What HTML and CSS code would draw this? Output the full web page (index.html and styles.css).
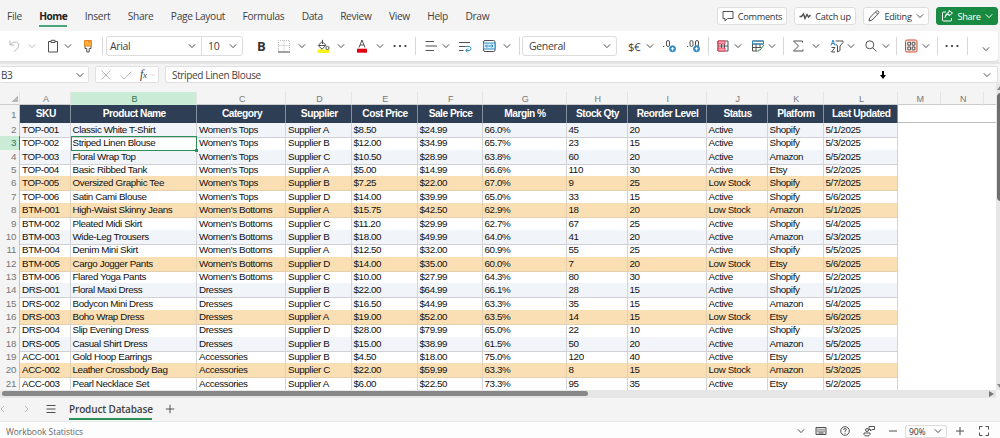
FILE: index.html
```html
<!DOCTYPE html>
<html lang="en">
<head>
  <meta charset="UTF-8" />
  <title>Product Database</title>
  <link rel="stylesheet" href="styles.css">
</head>
<body>
  <svg class="sprite">
    <symbol id="chev" viewBox="0 0 8 8"><path d="M.8 2.3 4 5.6 7.2 2.3"/></symbol>
    <symbol id="dots" viewBox="0 0 16 16"><g fill="#333" stroke="none"><circle cx="2.6" cy="8" r="1.1"/><circle cx="8" cy="8" r="1.1"/><circle cx="13.4" cy="8" r="1.1"/></g></symbol>
  </svg>

  <div class="menu-bar">
    <nav class="tabs">
      <span>File</span>
      <span class="active">Home</span>
      <span>Insert</span>
      <span>Share</span>
      <span>Page Layout</span>
      <span>Formulas</span>
      <span>Data</span>
      <span>Review</span>
      <span>View</span>
      <span>Help</span>
      <span>Draw</span>
    </nav>
    <div class="actions">
      <button class="comments"><svg class="icon" viewBox="0 0 12 12"><path d="M1 1.5h10v7H5.5L3 11V8.500H1z"/></svg>Comments</button>
      <button class="catchup"><svg class="icon" viewBox="0 0 12 12"><path stroke-width="1.4" d="M.5 6.500h2L4.500 4l1.500 4.500L8 4.500l1.500 2.500 2-2"/></svg>Catch up</button>
      <button class="editing"><svg class="icon" viewBox="0 0 12 12"><path d="M1 11l.8-3.300L8.500 1q1.500-.7 2.300.8.300.8-.3 1.400L4.200 10zM7.500 2l2.300 2.300"/></svg>Editing<svg class="chev"><use href="#chev"/></svg></button>
      <button class="share"><svg class="icon" viewBox="0 0 12 12"><path d="M5 2H2.500Q1.500 2 1.500 3v7q0 1 1 1h7q1 0 1-1V8M4 7.500q.5-3.500 4-3.500V6L11.500 3 8 .5v1.800Q4.500 3 4 7.500z"/></svg>Share<svg class="chev"><use href="#chev"/></svg></button>
    </div>
  </div>

  <div class="ribbon">
    <svg class="tool faded" viewBox="0 0 16 16"><path d="M3 2.500v4.500h4.500M3 7q3-4 6.500-3 3.500 1.500 2 5Q10.500 11 7 13.500"/></svg>
    <svg class="chev faded"><use href="#chev"/></svg>
    <svg class="tool" viewBox="0 0 16 16"><path d="M6 3.500H3.500v10.500h9V3.500H10M6 2.300h4v2.200H6z"/></svg>
    <svg class="chev"><use href="#chev"/></svg>
    <svg class="tool" viewBox="0 0 16 16"><path d="M5 8v2.500h1.800V14h2.400v-3.500H11V8"/><path fill="#fbb040" stroke="#e8881c" d="M4.500 2.500h7V8h-7z"/><path stroke="#e8881c" d="M8.500 2.500v2.200M10 2.500v2.200"/></svg>
    <i class="sep"></i>
    <div class="font-box"><span class="font-name">Arial<svg class="chev"><use href="#chev"/></svg></span><span class="font-size">10<svg class="chev"><use href="#chev"/></svg></span></div>
    <b class="bold">B</b>
    <svg class="tool" viewBox="0 0 16 16"><path stroke="#bbb" stroke-dasharray="1 1" d="M2.500 13V2.500h11V13M8 2.500V13M2.500 7.500h11"/><path stroke="#444" d="M2 14h12"/></svg>
    <svg class="chev"><use href="#chev"/></svg>
    <svg class="tool" viewBox="0 0 16 16"><path stroke="#f7f316" stroke-width="3.500" d="M2.500 13.200h11.500"/><path d="M7 3.500 3.200 7.500 7 11.200l4-4zM7.500 6V1.800M4 7.500h7"/><circle cx="12.500" cy="10" r="1.600"/></svg>
    <svg class="chev"><use href="#chev"/></svg>
    <svg class="tool" viewBox="0 0 16 16"><path stroke="#e3000f" stroke-width="4" d="M3 12.700h10"/><path d="M5 9.500 8 2l3 7.500M6 7h4"/></svg>
    <svg class="chev"><use href="#chev"/></svg>
    <svg class="tool"><use href="#dots"/></svg>
    <i class="sep"></i>
    <svg class="tool" viewBox="0 0 16 16"><path d="M2.500 3.500H11M2.500 8H14M2.500 12.500H11"/></svg>
    <svg class="chev"><use href="#chev"/></svg>
    <svg class="tool" viewBox="0 0 16 16"><path d="M2 4.500h11M2 8.500h6M2 12.500h4.500"/><path stroke="#2e8cc7" d="M8 8.500h4q2 0 2 2t-2 2H9M10.800 10.500l-2 2 2 2"/></svg>
    <svg class="tool" viewBox="0 0 16 16"><rect x="2.500" y="2.500" width="11.500" height="11" rx="1.500"/><path fill="#d8eefb" stroke="#2e8cc7" d="M2.500 5h11.500v6H2.500z"/><path stroke="#2e8cc7" d="M4.500 8h7.500M6 6.500 4.500 8 6 9.500M10.500 6.500 12 8l-1.500 1.500"/></svg>
    <svg class="chev"><use href="#chev"/></svg>
    <i class="sep"></i>
    <div class="number-box">General<svg class="chev"><use href="#chev"/></svg></div>
    <span class="currency">$€</span>
    <svg class="chev"><use href="#chev"/></svg>
    <svg class="tool" viewBox="0 0 16 16"><path d="M2 8.500h1.200"/><rect x="5.500" y="2.500" width="3" height="6" rx="1.500"/><circle cx="11.500" cy="10.800" r="3" fill="#2e8cc7" stroke="#2e8cc7"/><path stroke="#fff" d="M9.800 10.800h3.400M11.500 9.100v3.400"/></svg>
    <svg class="tool" viewBox="0 0 16 16"><path d="M2 8.500h1.200"/><rect x="5" y="2.500" width="3" height="6" rx="1.500"/><rect x="10.500" y="2.500" width="3" height="6" rx="1.500"/><circle cx="11.500" cy="10.800" r="3" fill="#2e8cc7" stroke="#2e8cc7"/><path stroke="#fff" d="M9.800 10.800h3.400M11.500 9.100v3.400"/></svg>
    <i class="sep"></i>
    <svg class="tool" viewBox="0 0 16 16"><path d="M3 3h10v10H3zM3 8h10M6.500 5v6M9.500 5v6"/><path stroke="#e2445c" fill="#f6a6b2" d="M3 3h7v3H3zM3 10h7v3H3z"/><path stroke="#e2445c" d="M3 3v10"/></svg>
    <svg class="chev"><use href="#chev"/></svg>
    <svg class="tool" viewBox="0 0 16 16"><path d="M2.500 3h11v3h-11zM2.500 6v7h5M2.500 9.500h9M6 6v7M10 6v3"/><path stroke="#2e8cc7" d="M2.500 3h11v3h-11z"/><path stroke="#279257" d="M8 13.500q.5-2 2-1.500L14 7"/></svg>
    <svg class="chev"><use href="#chev"/></svg>
    <i class="sep"></i>
    <svg class="tool" viewBox="0 0 16 16"><path d="M12.500 4.500V3H3.500l5 5-5 5h9.500v-1.500"/></svg>
    <svg class="chev"><use href="#chev"/></svg>
    <svg class="tool" viewBox="0 0 16 16"><path stroke="#2e8cc7" d="M2 7.500 4 2l2 5.500M3 5.500h2"/><path d="M2.500 9.500h3.500l-3.500 4.500H6M6.500 3h7.500v1.500L11 8v4.500L8.500 14V8L6.800 6"/></svg>
    <svg class="chev"><use href="#chev"/></svg>
    <svg class="tool" viewBox="0 0 16 16"><circle cx="6.800" cy="6.800" r="4"/><path d="M9.800 9.800 13.500 13.500"/></svg>
    <svg class="chev"><use href="#chev"/></svg>
    <i class="sep"></i>
    <svg class="tool" viewBox="0 0 16 16"><rect x="2.500" y="2" width="11.500" height="12" rx="1.500" stroke="#d9482b" fill="#fbe5df"/><path fill="#fff" d="M4.800 4.300h2.700v2.900H4.800zM9.200 4.300h2.700v2.900H9.200zM4.800 9h2.700v2.900H4.800zM9.200 9h2.700v2.900H9.200z"/></svg>
    <svg class="chev"><use href="#chev"/></svg>
    <i class="sep"></i>
    <svg class="tool"><use href="#dots"/></svg>
    <i class="sep"></i>
    <svg class="chev collapse"><use href="#chev"/></svg>
  </div>

  <div class="formula-bar">
    <div class="name-box">B3<svg class="chev"><use href="#chev"/></svg></div>
    <div class="fx-box">
      <svg class="icon faded" viewBox="0 0 12 12"><path d="M1.500 1.500l9 9M10.500 1.500l-9 9"/></svg>
      <svg class="icon faded" viewBox="0 0 12 12"><path d="M.5 6.500 4 10l7.500-7.500"/></svg>
      <i class="fx">f<small>x</small></i>
      <svg class="chev faded tiny"><use href="#chev"/></svg>
    </div>
    <div class="formula"><span>Striped Linen Blouse</span>
      <svg class="arrow" viewBox="0 0 6 8"><path fill="#000" stroke="none" d="M2 0h2v4h2L3 8 0 4h2z"/></svg>
      <svg class="chev"><use href="#chev"/></svg>
    </div>
  </div>

  <div class="sheet-area">
    <div class="grid" id="grid"></div>
    <div class="v-scroll">
      <i class="up"></i>
      <div class="v-thumb"></div>
      <i class="down"></i>
    </div>
  </div>

  <div class="h-scroll"><div class="h-thumb"></div><i class="right"></i></div>

  <div class="sheet-tabs">
    <svg class="nav faded" viewBox="0 0 8 8"><path d="M4 1 1 4l3 3"/></svg>
    <svg class="nav next faded" viewBox="0 0 8 8"><path d="M2 1l3 3-3 3"/></svg>
    <svg class="list" viewBox="0 0 10 10"><path d="M.5 1.500h9M.5 5h9M.5 8.500h9"/></svg>
    <span class="sheet-name">Product Database</span>
    <svg class="add" viewBox="0 0 10 10"><path d="M5 .8v8.400M.8 5h8.400"/></svg>
  </div>

  <div class="status-bar">
    <span>Workbook Statistics</span>
    <div class="status-tools">
      <svg class="chev"><use href="#chev"/></svg>
      <svg class="st" viewBox="0 0 12 12"><path fill="#ddd" d="M1 2.500h10v7H1z"/><path stroke-dasharray="1 1" d="M2.500 4.700h7M2.500 6.300h7"/><path d="M3.500 8h5"/></svg>
      <svg class="st" viewBox="0 0 12 12"><circle cx="6" cy="6" r="4.300"/><path d="M4.700 5q0-1.500 1.300-1.500T7.300 4.800Q7 5.700 6 6v.8M6 7.700v1"/></svg>
      <svg class="st" viewBox="0 0 12 12"><path d="M6 1.500h5.500v3H9L7.500 6V4.500H6zM1 8h6v1.500Q6.500 11 4 11T1 9.500z"/><circle cx="4" cy="5" r="1.500"/></svg>
      <svg class="st" viewBox="0 0 12 12"><path d="M2 6h8"/></svg>
      <div class="zoom-box">90%<svg class="chev"><use href="#chev"/></svg></div>
      <svg class="st" viewBox="0 0 12 12"><path d="M6 2v8M2 6h8"/></svg>
      <svg class="st" viewBox="0 0 12 12"><path d="M1.500 4.500v-3h3M7.500 1.500h3v3M10.500 7.500v3h-3M4.500 10.500h-3v-3"/></svg>
    </div>
  </div>

  <script>
    const headers = ['SKU', 'Product Name', 'Category', 'Supplier', 'Cost Price', 'Sale Price', 'Margin %',
      'Stock Qty', 'Reorder Level', 'Status', 'Platform', 'Last Updated'];

    const products = [
      ['TOP-001', 'Classic White T-Shirt', "Women's Tops", 'Supplier A', '$8.50', '$24.99', '66.0%', 45, 20, 'Active', 'Shopify', '5/1/2025'],
      ['TOP-002', 'Striped Linen Blouse', "Women's Tops", 'Supplier B', '$12.00', '$34.99', '65.7%', 23, 15, 'Active', 'Shopify', '5/3/2025'],
      ['TOP-003', 'Floral Wrap Top', "Women's Tops", 'Supplier C', '$10.50', '$28.99', '63.8%', 60, 20, 'Active', 'Amazon', '5/5/2025'],
      ['TOP-004', 'Basic Ribbed Tank', "Women's Tops", 'Supplier A', '$5.00', '$14.99', '66.6%', 110, 30, 'Active', 'Etsy', '5/2/2025'],
      ['TOP-005', 'Oversized Graphic Tee', "Women's Tops", 'Supplier B', '$7.25', '$22.00', '67.0%', 9, 25, 'Low Stock', 'Shopify', '5/7/2025'],
      ['TOP-006', 'Satin Cami Blouse', "Women's Tops", 'Supplier D', '$14.00', '$39.99', '65.0%', 33, 15, 'Active', 'Shopify', '5/6/2025'],
      ['BTM-001', 'High-Waist Skinny Jeans', "Women's Bottoms", 'Supplier A', '$15.75', '$42.50', '62.9%', 18, 20, 'Low Stock', 'Amazon', '5/1/2025'],
      ['BTM-002', 'Pleated Midi Skirt', "Women's Bottoms", 'Supplier C', '$11.20', '$29.99', '62.7%', 67, 25, 'Active', 'Shopify', '5/4/2025'],
      ['BTM-003', 'Wide-Leg Trousers', "Women's Bottoms", 'Supplier B', '$18.00', '$49.99', '64.0%', 41, 20, 'Active', 'Amazon', '5/3/2025'],
      ['BTM-004', 'Denim Mini Skirt', "Women's Bottoms", 'Supplier A', '$12.50', '$32.00', '60.9%', 55, 25, 'Active', 'Shopify', '5/5/2025'],
      ['BTM-005', 'Cargo Jogger Pants', "Women's Bottoms", 'Supplier D', '$14.00', '$35.00', '60.0%', 7, 20, 'Low Stock', 'Etsy', '5/6/2025'],
      ['BTM-006', 'Flared Yoga Pants', "Women's Bottoms", 'Supplier C', '$10.00', '$27.99', '64.3%', 80, 30, 'Active', 'Shopify', '5/2/2025'],
      ['DRS-001', 'Floral Maxi Dress', 'Dresses', 'Supplier B', '$22.00', '$64.99', '66.1%', 28, 15, 'Active', 'Shopify', '5/1/2025'],
      ['DRS-002', 'Bodycon Mini Dress', 'Dresses', 'Supplier C', '$16.50', '$44.99', '63.3%', 35, 15, 'Active', 'Amazon', '5/4/2025'],
      ['DRS-003', 'Boho Wrap Dress', 'Dresses', 'Supplier A', '$19.00', '$52.00', '63.5%', 14, 15, 'Low Stock', 'Etsy', '5/6/2025'],
      ['DRS-004', 'Slip Evening Dress', 'Dresses', 'Supplier D', '$28.00', '$79.99', '65.0%', 22, 10, 'Active', 'Shopify', '5/3/2025'],
      ['DRS-005', 'Casual Shirt Dress', 'Dresses', 'Supplier B', '$15.00', '$38.99', '61.5%', 50, 20, 'Active', 'Amazon', '5/5/2025'],
      ['ACC-001', 'Gold Hoop Earrings', 'Accessories', 'Supplier B', '$4.50', '$18.00', '75.0%', 120, 40, 'Active', 'Etsy', '5/1/2025'],
      ['ACC-002', 'Leather Crossbody Bag', 'Accessories', 'Supplier C', '$22.00', '$59.99', '63.3%', 8, 15, 'Low Stock', 'Amazon', '5/3/2025'],
      ['ACC-003', 'Pearl Necklace Set', 'Accessories', 'Supplier A', '$6.00', '$22.50', '73.3%', 95, 35, 'Active', 'Etsy', '5/2/2025']
    ];

    let html = '<div class="row letters"><span class="corner"></span>';
    'ABCDEFGHIJKLMN'.split('').forEach(letter => {
      html += `<span class="${letter === 'B' ? 'selected' : ''}">${letter}</span>`;
    });
    html += '</div><div class="row head"><span class="num">1</span>';
    headers.forEach(text => {
      html += `<span class="th">${text}</span>`;
    });
    html += '</div>';

    products.forEach((product, index) => {
      const rowNumber = index + 2;
      let rowClass = rowNumber % 2 === 0 ? 'striped' : '';
      if (product[9] === 'Low Stock') {
        rowClass = 'low';
      }
      html += `<div class="row ${rowClass}"><span class="num ${rowNumber === 3 ? 'selected' : ''}">${rowNumber}</span>`;
      product.forEach((value, col) => {
        html += `<span class="td ${rowNumber === 3 && col === 1 ? 'cursor' : ''}">${value}</span>`;
      });
      html += '</div>';
    });

    document.getElementById('grid').innerHTML = html;
  </script>
</body>
</html>
```
FILE: styles.css
```css
* {
  box-sizing: border-box;
}

body {
  margin: 0;
  width: 1000px;
  height: 438px;
  overflow: hidden;
  display: flex;
  flex-direction: column;
  background: #f4f4f4;
  font-family: "Open Sans", "Noto Sans", sans-serif;
  font-size: 10px;
  letter-spacing: -.35px;
  color: #424242;
}

svg {
  fill: none;
  stroke: #505050;
  stroke-width: 1;
  flex: none;
  display: block;
}

.sprite {
  position: absolute;
  width: 0;
  height: 0;
}

.chev {
  width: 8px;
  height: 8px;
}

.faded {
  stroke: #b8b8b8;
}

.icon {
  width: 12px;
  height: 12px;
}

/* menu */
.menu-bar {
  height: 31px;
  flex: none;
  display: flex;
  justify-content: space-between;
}

.tabs {
  display: flex;
  gap: 17.4px;
  padding: 9px 0 0 7px;
  font-size: 10.2px;
  letter-spacing: -.32px;
  line-height: 15px;
  white-space: nowrap;
}

.tabs .active {
  font-weight: bold;
  letter-spacing: -.5px;
  color: #222;
  height: 18px;
  border-bottom: 2px solid #4ba67a;
}

.actions {
  display: flex;
  gap: 7px;
  padding: 7px 2px 0 0;
}

.actions button {
  height: 18px;
  display: flex;
  align-items: center;
  justify-content: center;
  gap: 4px;
  padding: 0;
  background: #fff;
  border: 1px solid #dedede;
  border-radius: 3px;
  font-family: inherit;
  font-size: 9.2px;
  letter-spacing: -.3px;
  color: #333;
  white-space: nowrap;
}

.comments { width: 70px; }
.catchup { width: 62px; }
.editing { width: 66px; }

.actions .share {
  width: 62px;
  background: #188a42;
  border-color: #188a42;
  color: #fff;
}

.share svg {
  stroke: #fff;
}

/* ribbon */
.ribbon {
  width: 998px;
  height: 30px;
  flex: none;
  padding-left: 7px;
  background: #fff;
  border-radius: 0 4px 4px 0;
  box-shadow: 0 2px 2px #dcdcdc;
  display: grid;
  align-items: center;
  grid-template-columns: 21px 17px 19px 16px 22px 4px 149px 21px 22px 17px 22px 17px 22px 16px 23px 8px 19px 15px 24px 22px 16px 3px 106px 18px 15px 24px 23px 7px 19px 16px 18px 15px 7px 22px 17px 18px 16px 19px 14px 7px 19px 15px 7px 23px 15px 8px;
}

.tool {
  width: 16px;
  height: 16px;
}

.sep {
  width: 1px;
  height: 18px;
  background: #d8d8d8;
}

.font-box, .number-box {
  height: 20px;
  display: flex;
  border: 1px solid #dcdcdc;
  border-radius: 3px;
  font-size: 10.5px;
}

.font-box {
  width: 137px;
}

.font-name, .font-size, .number-box {
  display: flex;
  align-items: center;
  justify-content: space-between;
  padding: 0 5px 0 3px;
}

.font-name {
  width: 94px;
}

.font-size {
  flex: 1;
  padding-left: 6px;
  border-left: 1px solid #dcdcdc;
}

.number-box {
  width: 95px;
  padding-left: 6px;
}

.bold {
  padding-left: 2px;
  font-size: 13px;
  color: #333;
}

.currency {
  font-size: 11.5px;
  letter-spacing: -.7px;
}

.collapse {
  margin-top: 6px;
}

/* formula bar */
.formula-bar {
  height: 20px;
  flex: none;
  display: flex;
  margin-top: 1px;
  padding: 2px 2px 0 0;
  border-top: 2px solid #e5e5e5;
}

.formula-bar > div {
  height: 17px;
  display: flex;
  align-items: center;
  background: #fff;
  border: 1px solid #e0e0e0;
  border-radius: 2px;
}

.formula-bar .name-box {
  width: 89px;
  justify-content: space-between;
  padding: 0 4px 0 1px;
  border-left: 0;
}

.fx-box {
  width: 64px;
  margin-left: 6px;
  padding-left: 4px;
  gap: 8px;
}

.fx-box .icon {
  width: 12px;
}

.fx {
  font-family: "Liberation Serif", serif;
  font-size: 12px;
  line-height: 14px;
}

.fx small {
  font-size: 9px;
}

.fx-box .tiny {
  width: 5px;
  margin-left: -5px;
}

.formula {
  flex: 1;
  margin-left: 6px;
  padding: 0 6px;
}

.formula span {
  flex: 1;
}

.arrow {
  width: 6px;
  height: 8px;
  margin-right: 97px;
}

/* grid */
.sheet-area {
  height: 308px;
  flex: none;
  display: flex;
}

.grid {
  width: 996px;
  height: 308px;
  padding-top: 10px;
  overflow: hidden;
  font-family: "Liberation Sans", Arial, sans-serif;
  font-size: 9.8px;
  letter-spacing: -.38px;
  color: #111;
}

.row {
  width: 996px;
  height: 13.37px;
  display: grid;
  grid-template-columns: 20px 50.5px 126.5px 89px 65.5px 66px 65px 84px 61px 79px 61px 56px 74.5px 43px 43px;
  background: #fff;
  white-space: nowrap;
}

.letters {
  height: 12.6px;
  background: #f4f4f4;
  color: #777;
  font-size: 9px;
  line-height: 14px;
  text-align: center;
  border-bottom: 1px solid #ccc;
}

.letters span {
  padding-left: 2px;
  border-right: 1px solid #e4e4e4;
}

.letters .selected {
  background: #caebd6;
  color: #2d7a50;
}

.corner {
  background: linear-gradient(135deg, transparent 50%, #b8b8b8 50%) no-repeat 11px 3px / 7px 7px;
}

.num {
  background: #f4f4f4;
  border-right: 1px solid #c4c4c4;
  border-bottom: 1px solid #e2e2e2;
  color: #777;
  text-align: right;
  padding-right: 3px;
  line-height: 14px;
}

.num.selected {
  background: #caebd6;
  border-right: 1px solid #279257;
  color: #2d7a50;
}

.head {
  height: 18.4px;
  border-bottom: 1px solid #bbb;
}

.head .num {
  line-height: 19px;
}

.th {
  padding-left: 2px;
  background: #2e3e55;
  border-right: 1px solid #8590a0;
  color: #fff;
  font-size: 10.2px;
  font-weight: bold;
  letter-spacing: -.5px;
  line-height: 18px;
  text-align: center;
}

.td {
  padding-left: 2px;
  line-height: 13.500px;
  border-right: 1px solid #d4d4d8;
  border-bottom: 1px solid #d0d0d4;
}

.striped .td {
  background: #f1f4f8;
}

.low .td {
  background: #fbdfb4;
  border-color: #e6d0ac;
}

.cursor {
  position: relative;
  outline: 1px solid #279257;
  outline-offset: -1px;
}

.cursor::after {
  content: "";
  position: absolute;
  right: -2px;
  bottom: -2px;
  width: 3px;
  height: 3px;
  background: #279257;
}

.v-scroll {
  width: 4px;
  background: #e6e6e6;
  padding: 4px 0 2px 1px;
  display: flex;
  flex-direction: column;
  overflow: hidden;
}

.v-thumb {
  width: 8px;
  height: 108px;
  margin: 3px 0 auto;
  border-radius: 4px;
  background: #6e6e6e;
}

.up, .down {
  border: 3px solid transparent;
  width: 0;
  border-top-width: 0;
  border-bottom: 4px solid #888;
}

.down {
  border-bottom: 0;
  border-top: 4px solid #888;
}

.h-scroll {
  width: 996px;
  height: 8px;
  flex: none;
  display: flex;
  align-items: center;
  justify-content: space-between;
  padding: 0 2px;
  background: #e6e6e6;
}

.h-thumb {
  width: 586px;
  height: 5px;
  margin-bottom: 1px;
  border-radius: 3px;
  background: #888;
}

.right {
  border: 3px solid transparent;
  border-left: 5px solid #777;
  border-right: 0;
}

/* sheet tabs */
.sheet-tabs {
  height: 24px;
  flex: none;
  display: flex;
  align-items: center;
  padding-bottom: 1px;
  border-bottom: 1px solid #e8e8e8;
}

.nav {
  width: 8px;
  height: 8px;
}

.next {
  margin-left: 15px;
}

.list {
  width: 10px;
  height: 10px;
  margin-left: 15px;
}

.sheet-name {
  margin: 2px 0 0 13px;
  width: 83px;
  height: 20px;
  line-height: 18px;
  font-weight: 600;
  letter-spacing: -.15px;
  white-space: nowrap;
  border-bottom: 2px solid #279257;
}

.add {
  width: 10px;
  height: 10px;
  margin-left: 13px;
}

/* status bar */
.status-bar {
  height: 16px;
  display: flex;
  align-items: center;
  justify-content: space-between;
  padding: 2px 10px 0 6px;
  background: #fdfdfd;
  font-size: 8.5px;
  letter-spacing: -.05px;
  color: #666;
}

.status-tools {
  display: flex;
  align-items: center;
  gap: 12px;
}

.status-tools > .chev {
  margin-right: -2px;
}

.st {
  width: 12px;
  height: 12px;
}

.zoom-box {
  width: 42px;
  height: 13px;
  margin: 0 -5px 0 -6px;
  padding: 0 4px 0 3px;
  display: flex;
  align-items: center;
  justify-content: space-between;
  border: 1px solid #ddd;
  border-radius: 2px;
  color: #333;
}
```
